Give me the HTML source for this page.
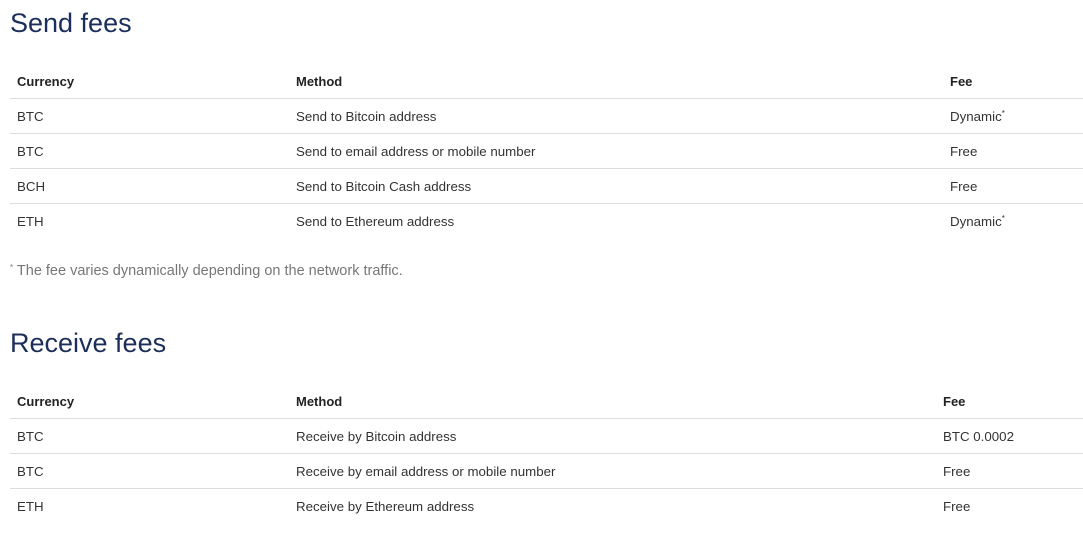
<!DOCTYPE html>
<html><head><style>
body{margin:0;width:1083px;height:536px;background:#fff;font-family:"Liberation Sans",sans-serif;color:#333;position:relative;overflow:hidden}
h2{position:absolute;left:10px;margin:0;font-weight:normal;font-size:27px;color:#1c2f5a;line-height:36px}
.t{position:absolute;left:10px;width:1073px;font-size:13.3px}
.r{position:relative;height:34px;border-bottom:1px solid #ddd}
.r span{position:absolute;top:0;line-height:35px}
.h span{font-weight:bold;color:#222;font-size:13px}
.c1{left:7px}.c2{left:286px}
sup{font-size:8px;position:relative;top:-5px;vertical-align:baseline;line-height:0}
.fn{position:absolute;left:10px;top:263px;font-size:14.5px;color:#777}
</style></head><body>
<h2 style="top:5px">Send fees</h2>
<div class="t" style="top:64px">
<div class="r h"><span class="c1">Currency</span><span class="c2">Method</span><span style="left:940px">Fee</span></div>
<div class="r"><span class="c1">BTC</span><span class="c2">Send to Bitcoin address</span><span style="left:940px">Dynamic<sup>*</sup></span></div>
<div class="r"><span class="c1">BTC</span><span class="c2">Send to email address or mobile number</span><span style="left:940px">Free</span></div>
<div class="r"><span class="c1">BCH</span><span class="c2">Send to Bitcoin Cash address</span><span style="left:940px">Free</span></div>
<div class="r" style="border:none"><span class="c1">ETH</span><span class="c2">Send to Ethereum address</span><span style="left:940px">Dynamic<sup>*</sup></span></div>
</div>
<div class="fn"><sup>*</sup> The fee varies dynamically depending on the network traffic.</div>
<h2 style="top:325px">Receive fees</h2>
<div class="t" style="top:384px">
<div class="r h"><span class="c1">Currency</span><span class="c2">Method</span><span style="left:933px">Fee</span></div>
<div class="r"><span class="c1">BTC</span><span class="c2">Receive by Bitcoin address</span><span style="left:933px">BTC 0.0002</span></div>
<div class="r"><span class="c1">BTC</span><span class="c2">Receive by email address or mobile number</span><span style="left:933px">Free</span></div>
<div class="r" style="border:none"><span class="c1">ETH</span><span class="c2">Receive by Ethereum address</span><span style="left:933px">Free</span></div>
</div>
</body></html>
